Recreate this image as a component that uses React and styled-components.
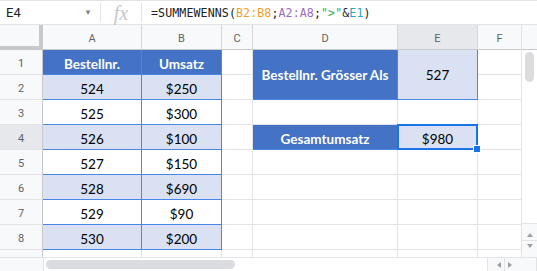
import React from "react";
import styled, { createGlobalStyle } from "styled-components";

const GlobalStyle = createGlobalStyle`
  html, body {
    margin: 0;
    padding: 0;
    background: #fff;
  }
  body {
    font-family: Roboto, "Liberation Sans", sans-serif;
  }
`;

const Sheet = styled.div`
  width: 537px;
  height: 271px;
  display: flex;
  flex-direction: column;
  overflow: hidden;
  background: #fff;
`;

const FormulaBar = styled.div`
  height: 23px;
  display: flex;
  align-items: center;
  border-top: 1px solid #e1e3e6;
  border-bottom: 1px solid #e1e3e6;
`;

const NameBox = styled.div`
  width: 100px;
  display: flex;
  align-items: center;
  justify-content: space-between;
  padding: 0 8px 0 6px;
  box-sizing: border-box;
  font-size: 13px;
  color: #202124;
`;

const Caret = styled.span`
  font-size: 8px;
  color: #80868b;
`;

const Divider = styled.div`
  width: 1px;
  height: 19px;
  background: #e1e3e6;
`;

const FxMark = styled.div`
  width: 40px;
  text-align: center;
  font-family: "Liberation Serif", serif;
  font-style: italic;
  font-size: 20px;
  color: #c4c7cb;
  line-height: 20px;
`;

const Formula = styled.div`
  padding-left: 9px;
  font-family: "DejaVu Sans Mono", "Liberation Mono", monospace;
  font-size: 11.6px;
  letter-spacing: 0.1px;
  color: #202124;
  white-space: pre;
`;

const Ref = styled.span`
  color: ${(p) => p.color};
`;

const Body = styled.div`
  flex: 1;
  display: flex;
  min-height: 0;
`;

const Grid = styled.div`
  flex: 1;
  display: grid;
  grid-template-columns: 43px 99px 80px 31px 145px 80px 44px;
  grid-auto-rows: 25px;
  overflow: hidden;
`;

const ColHead = styled.div`
  display: flex;
  align-items: center;
  justify-content: center;
  padding-top: 2px;
  box-sizing: border-box;
  font-size: 11px;
  color: #5f6368;
  background: ${(p) => (p.active ? "#e6e8ec" : "#f8f9fa")};
  border-right: 1px solid #d4d6d9;
  border-bottom: 1px solid #c7c9cc;
`;

const Corner = styled(ColHead)`
  border-right: 4px solid #c7c9cc;
  border-bottom: 4px solid #c7c9cc;
  padding-top: 0;
`;

const RowHead = styled(ColHead)`
  align-items: ${(p) => (p.clipped ? "flex-start" : "center")};
  padding-top: ${(p) => (p.clipped ? "6px" : "2px")};
  border-right: 1px solid #c7c9cc;
  border-bottom: 1px solid #e1e3e6;
`;

const Cell = styled.div`
  position: relative;
  z-index: ${(p) => (p.selected ? 2 : "auto")};
  display: flex;
  align-items: center;
  justify-content: center;
  padding-top: ${(p) => (p.tall ? "0" : "3px")};
  box-sizing: border-box;
  grid-row: span ${(p) => p.span || 1};
  font-family: Lato, "Open Sans", sans-serif;
  font-size: 13.5px;
  font-weight: ${(p) => (p.head ? 700 : 400)};
  color: ${(p) => (p.head ? "#ffffff" : "#000000")};
  background: ${(p) =>
    p.head ? "#4472c4" : p.fill ? "#d9e1f2" : "#ffffff"};
  border-right: 1px solid ${(p) => (p.edge ? "#4a86e8" : "#e1e3e6")};
  border-bottom: 1px solid ${(p) => (p.edge ? "#4a86e8" : "#e1e3e6")};
`;

const Selection = styled.div`
  position: absolute;
  left: -1px;
  top: -1px;
  right: -1px;
  bottom: -1px;
  border: 2px solid #1a73e8;
  pointer-events: none;
`;

const Handle = styled.div`
  position: absolute;
  right: -4px;
  bottom: -4px;
  width: 6px;
  height: 6px;
  background: #1a73e8;
  border: 1px solid #fff;
`;

const VScroll = styled.div`
  width: 15px;
  display: flex;
  flex-direction: column;
  border-left: 1px solid #e1e3e6;
  background: #fff;
`;

const VScrollHead = styled.div`
  height: 24px;
  background: #f8f9fa;
  border-bottom: 1px solid #c7c9cc;
`;

const VTrack = styled.div`
  flex: 1;
  padding: 2px 3px;
`;

const VThumb = styled.div`
  width: 9px;
  height: 30px;
  border-radius: 5px;
  background: #dadce0;
`;

const ArrowButton = styled.div`
  height: 16px;
  display: flex;
  align-items: center;
  justify-content: center;
  background: #f8f9fa;
  border-top: 1px solid #e1e3e6;
  ${(p) => p.side && "width: 16px; height: auto; border-top: none; border-left: 1px solid #e1e3e6;"}
`;

const Tri = styled.div`
  width: 0;
  height: 0;
  border: 3px solid transparent;
  ${(p) => `border-${p.dir}-color: #9aa0a6;`}
  border-${(p) => p.dir}-width: 4px;
  ${(p) => (p.dir === "bottom" ? "margin-top: 3px;" : "")}
  ${(p) => (p.dir === "top" ? "margin-bottom: 3px;" : "")}
  ${(p) => (p.dir === "right" ? "margin-left: 3px;" : "")}
  ${(p) => (p.dir === "left" ? "margin-right: 3px;" : "")}
`;

const HScroll = styled.div`
  height: 13px;
  display: flex;
  border-top: 1px solid #e1e3e6;
  background: #fff;
`;

const HCorner = styled.div`
  width: ${(p) => p.w}px;
  background: #f8f9fa;
  border-right: 1px solid #e1e3e6;
`;

const HTrack = styled.div`
  flex: 1;
  padding: 2px 2px;
`;

const HThumb = styled.div`
  width: 189px;
  height: 9px;
  border-radius: 5px;
  background: #dadce0;
`;

const columns = ["A", "B", "C", "D", "E", "F"];

const orders = [
  ["524", "$250"],
  ["525", "$300"],
  ["526", "$100"],
  ["527", "$150"],
  ["528", "$690"],
  ["529", "$90"],
  ["530", "$200"],
];

function SideCells({ row }) {
  if (row === 1) {
    return (
      <>
        <Cell />
        <Cell head span={2} tall edge>
          Bestellnr. Grösser Als
        </Cell>
        <Cell fill span={2} tall edge>
          527
        </Cell>
        <Cell />
      </>
    );
  }
  if (row === 2) {
    return (
      <>
        <Cell />
        <Cell />
      </>
    );
  }
  if (row === 4) {
    return (
      <>
        <Cell />
        <Cell head edge>
          Gesamtumsatz
        </Cell>
        <Cell fill edge selected>
          $980
          <Selection />
          <Handle />
        </Cell>
        <Cell />
      </>
    );
  }
  return (
    <>
      <Cell />
      <Cell />
      <Cell />
      <Cell />
    </>
  );
}

export default function App() {
  return (
    <Sheet>
      <GlobalStyle />
      <FormulaBar>
        <NameBox>
          E4
          <Caret>▼</Caret>
        </NameBox>
        <Divider />
        <FxMark>fx</FxMark>
        <Divider />
        <Formula>
          =SUMMEWENNS(<Ref color="#f29b30">B2:B8</Ref>;
          <Ref color="#9b6bc0">A2:A8</Ref>;<Ref color="#3aa757">"&gt;"</Ref>
          &amp;<Ref color="#2aa5c5">E1</Ref>)
        </Formula>
      </FormulaBar>
      <Body>
        <Grid>
          <Corner />
          {columns.map((c) => (
            <ColHead key={c} active={c === "E"}>
              {c}
            </ColHead>
          ))}

          <RowHead>1</RowHead>
          <Cell head edge>Bestellnr.</Cell>
          <Cell head edge>Umsatz</Cell>
          <SideCells row={1} />

          {orders.map(([id, sum], i) => (
            <React.Fragment key={id}>
              <RowHead active={i + 2 === 4}>{i + 2}</RowHead>
              <Cell edge fill={i % 2 === 0}>{id}</Cell>
              <Cell edge fill={i % 2 === 0}>{sum}</Cell>
              <SideCells row={i + 2} />
            </React.Fragment>
          ))}

          <RowHead clipped>9</RowHead>
          <Cell />
          <Cell />
          <Cell />
          <Cell />
          <Cell />
          <Cell />
        </Grid>
        <VScroll>
          <VScrollHead />
          <VTrack>
            <VThumb />
          </VTrack>
          <ArrowButton>
            <Tri dir="bottom" />
          </ArrowButton>
          <ArrowButton>
            <Tri dir="top" />
          </ArrowButton>
        </VScroll>
      </Body>
      <HScroll>
        <HCorner w={43} />
        <HTrack>
          <HThumb />
        </HTrack>
        <ArrowButton side>
          <Tri dir="right" />
        </ArrowButton>
        <ArrowButton side>
          <Tri dir="left" />
        </ArrowButton>
        <HCorner w={15} />
      </HScroll>
    </Sheet>
  );
}
